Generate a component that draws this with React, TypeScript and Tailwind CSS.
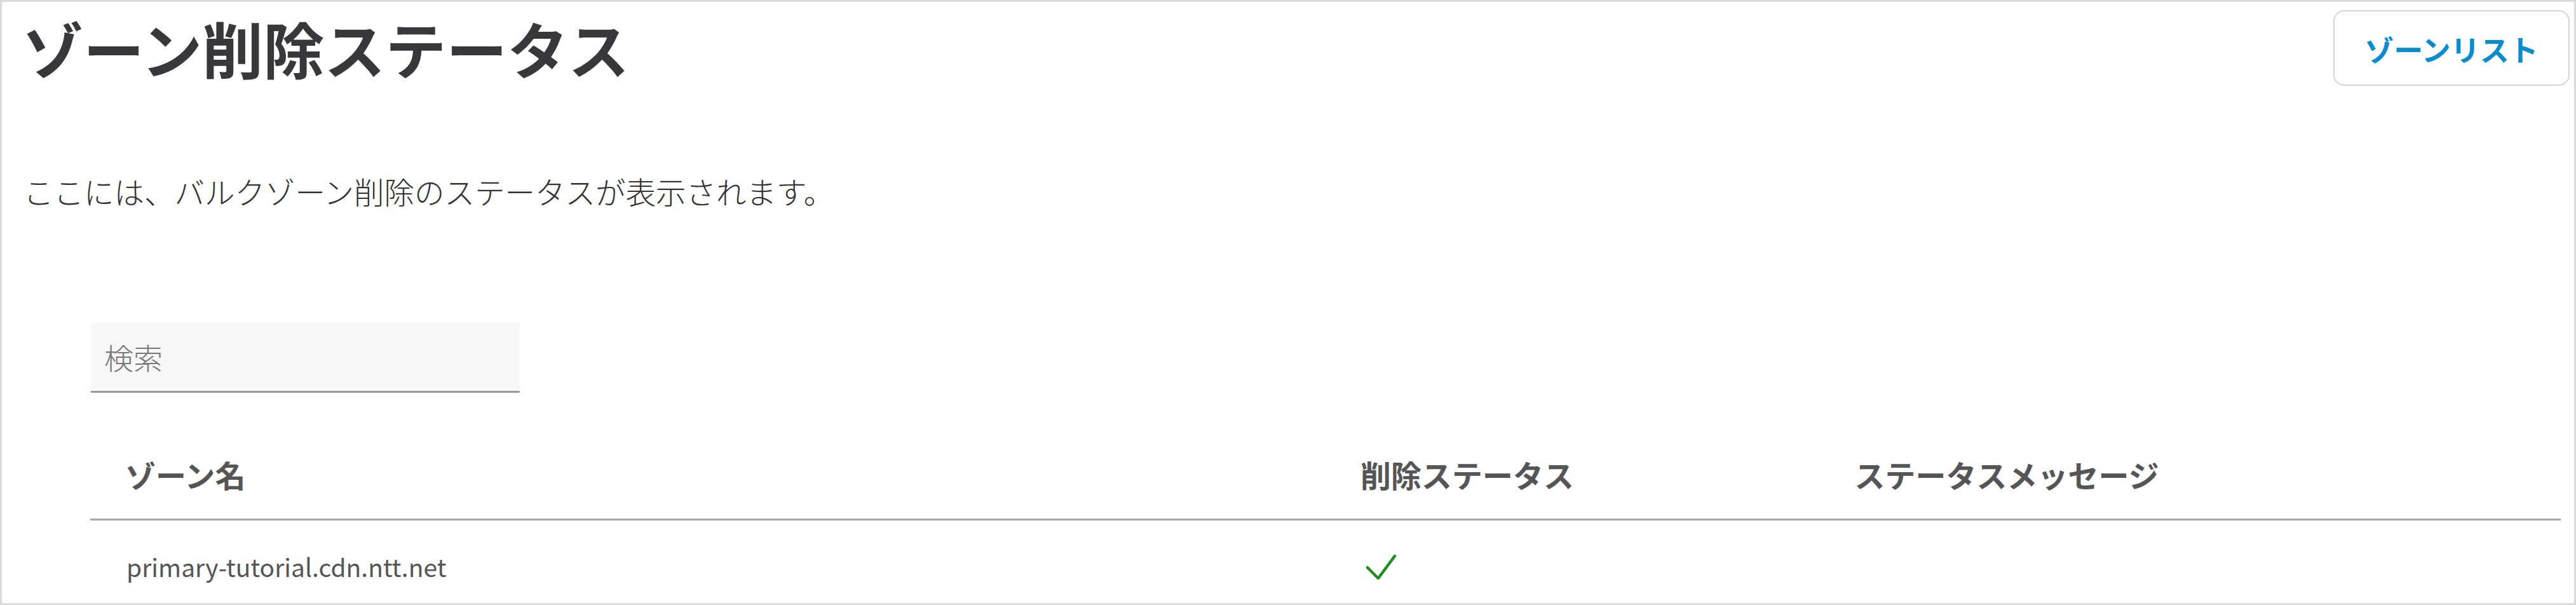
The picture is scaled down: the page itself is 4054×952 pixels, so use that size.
import React from "react";

export default function App() {
  return (
    <div className="w-full h-[952px] border-[3px] border-[#dadada] bg-white overflow-hidden font-['Noto_Sans_CJK_JP','Noto_Sans_CJK_SC',sans-serif]">
      <div className="flex justify-between items-start pl-[32px] pr-[7px] pt-[13px]">
        <h1 className="mt-[11px] text-[96px] leading-none font-bold text-[#38383c]">
          ゾーン削除ステータス
        </h1>
        <button className="h-[119px] w-[372px] rounded-[17px] border-2 border-[#d6d6d6] bg-white text-[46px] font-bold text-[#0a8bcb] leading-none">
          ゾーンリスト
        </button>
      </div>

      <p className="mt-[142px] pl-[34px] text-[47.5px] leading-none font-light text-[#333]">
        ここには、バルクゾーン削除のステータスが表示されます。
      </p>

      <div className="mt-[183px] ml-[140px] w-[675px] h-[110px] bg-[#f7f7f7] border-b-[3px] border-[#999] flex items-center pl-[21px]">
        <span className="text-[46px] leading-none font-light text-[#777]">検索</span>
      </div>

      <div className="mt-[58px] ml-[139px] mr-[21px]">
        <div className="grid grid-cols-[50%_20%_30%] h-[143px] border-b-[3px] border-[#a6a6a6] items-center text-[48px] font-bold text-[#555] leading-none">
          <div className="pl-[55px]">ゾーン名</div>
          <div className="pl-[55px]">削除ステータス</div>
          <div className="pl-[55px]">ステータスメッセージ</div>
        </div>
        <div className="grid grid-cols-[50%_20%_30%] h-[146px] items-center text-[39px] text-[#555] leading-none">
          <div className="pl-[57px]">primary-tutorial.cdn.ntt.net</div>
          <div className="pl-[55px]">
            <svg width="48" height="40" viewBox="0 0 48 40" className="ml-[9px]">
              <path d="M2 21 L19 38 L45 3" fill="none" stroke="#1f8c1f" strokeWidth="4.5" strokeLinecap="round" strokeLinejoin="round" />
            </svg>
          </div>
          <div className="pl-[55px]"></div>
        </div>
      </div>
    </div>
  );
}
